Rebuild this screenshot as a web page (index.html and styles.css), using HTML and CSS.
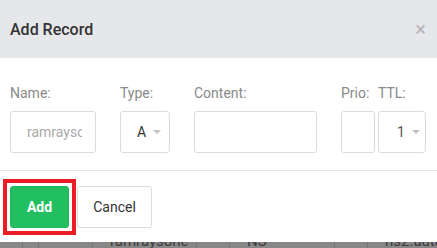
FILE: index.html
```html
<!DOCTYPE html>
<html lang="en">

<head>
    <meta charset="UTF-8">
    <meta name="viewport" content="width=device-width, initial-scale=1.0">
    <title>Add Record</title>
    <link rel="stylesheet" href="styles.css">
</head>

<body>
    <div class="modal">
        <div class="modal-header">
            <h3>Add Record</h3>
            <span class="close">&times;</span>
        </div>
        <div class="modal-body">
            <div class="field field-name">
                <label>Name:</label>
                <div class="input placeholder"><span class="value">ramraysone</span></div>
            </div>
            <div class="field field-type">
                <label>Type:</label>
                <div class="input select"><span>A</span><i class="caret"></i></div>
            </div>
            <div class="field field-content">
                <label>Content:</label>
                <div class="input"></div>
            </div>
            <div class="field field-prio">
                <label>Prio:</label>
                <div class="input"></div>
            </div>
            <div class="field field-ttl">
                <label>TTL:</label>
                <div class="input select ttl"><span>1</span><i class="caret"></i></div>
            </div>
        </div>
        <div class="modal-footer">
            <div class="highlight">
                <button class="btn btn-add">Add</button>
            </div>
            <button class="btn btn-cancel">Cancel</button>
        </div>
    </div>

    <div class="table-row">
        <div class="cell" style="width: 23px"></div>
        <div class="cell" style="width: 16px"></div>
        <div class="cell" style="width: 54px"></div>
        <div class="cell" style="width: 104px"><span>ramraysone</span></div>
        <div class="cell" style="width: 33px"></div>
        <div class="cell" style="width: 105px"><span>NS</span></div>
        <div class="cell" style="width: 33px"></div>
        <div class="cell last"><span>ns2.autodns</span></div>
    </div>
</body>

</html>
```

FILE: styles.css
```css
body {
    margin: 0;
    padding: 0;
    font-family: Roboto, "Liberation Sans", sans-serif;
    background-color: #ffffff;
    overflow: hidden;
}

.modal {
    width: 437px;
    background-color: #ffffff;
}

.modal-header {
    height: 58px;
    background-color: #e6e7eb;
    display: flex;
    align-items: center;
    justify-content: space-between;
    padding: 0 11px 0 10px;
    box-sizing: border-box;
}

.modal-header h3 {
    margin: 0;
    font-size: 16px;
    font-weight: 500;
    color: #333333;
}

.close {
    font-size: 20px;
    color: #b4b4b8;
    line-height: 20px;
}

.modal-body {
    display: flex;
    padding: 25px 0 17px 10px;
    border-bottom: 1px solid #e5e5e5;
}

.field {
    display: flex;
    flex-direction: column;
}

.field label {
    font-size: 14px;
    line-height: 20px;
    color: #8a8a8a;
    margin-bottom: 8px;
}

.input {
    height: 42px;
    box-sizing: border-box;
    border: 1px solid #dcdcdc;
    border-radius: 3px;
    display: flex;
    align-items: center;
    font-size: 14px;
    overflow: hidden;
    white-space: nowrap;
}

.field-name .input {
    width: 86px;
    padding: 0 13px 0 16px;
    color: #aaaaaa;
}

.field-name .value {
    display: block;
    overflow: hidden;
    width: 100%;
}

.field-name {
    margin-right: 24px;
}

.field-type .input {
    width: 50px;
    padding-left: 16px;
}

.field-type {
    margin-right: 24px;
}

.field-content .input {
    width: 123px;
}

.field-content {
    margin-right: 24px;
}

.field-prio .input {
    width: 34px;
}

.field-prio {
    margin-right: 3px;
}

.field-ttl .input {
    width: 48px;
    padding-left: 18px;
}

.select span {
    color: #333333;
    margin-right: 7px;
}

.select.ttl span {
    color: #555555;
}

.caret {
    width: 0;
    height: 0;
    border-left: 4px solid transparent;
    border-right: 4px solid transparent;
    border-top: 4px solid #c2c2c2;
}

.modal-footer {
    display: flex;
    align-items: center;
    height: 71px;
    padding-left: 3px;
}

.highlight {
    border: 4px solid #ee1c25;
    padding: 3px;
    display: flex;
}

.btn {
    height: 42px;
    border-radius: 3px;
    font-family: Roboto, "Liberation Sans", sans-serif;
    font-size: 14px;
    cursor: pointer;
}

.btn-add {
    width: 59px;
    background-color: #22bf61;
    border: 1px solid #1fb85a;
    color: #ffffff;
    font-weight: bold;
}

.btn-cancel {
    width: 75px;
    margin-left: 1px;
    background-color: #ffffff;
    border: 1px solid #dcdcdc;
    color: #333333;
}

.table-row {
    display: flex;
    height: 6px;
    background-color: #878787;
    overflow: hidden;
}

.cell {
    border-right: 1px solid #767676;
    box-sizing: border-box;
    font-size: 15px;
    color: #3c3c3c;
    white-space: nowrap;
    overflow: hidden;
}

.cell span {
    display: block;
    margin-top: -10px;
    padding-left: 17px;
}

.cell.last {
    flex: 1;
    border-right: none;
}
```
